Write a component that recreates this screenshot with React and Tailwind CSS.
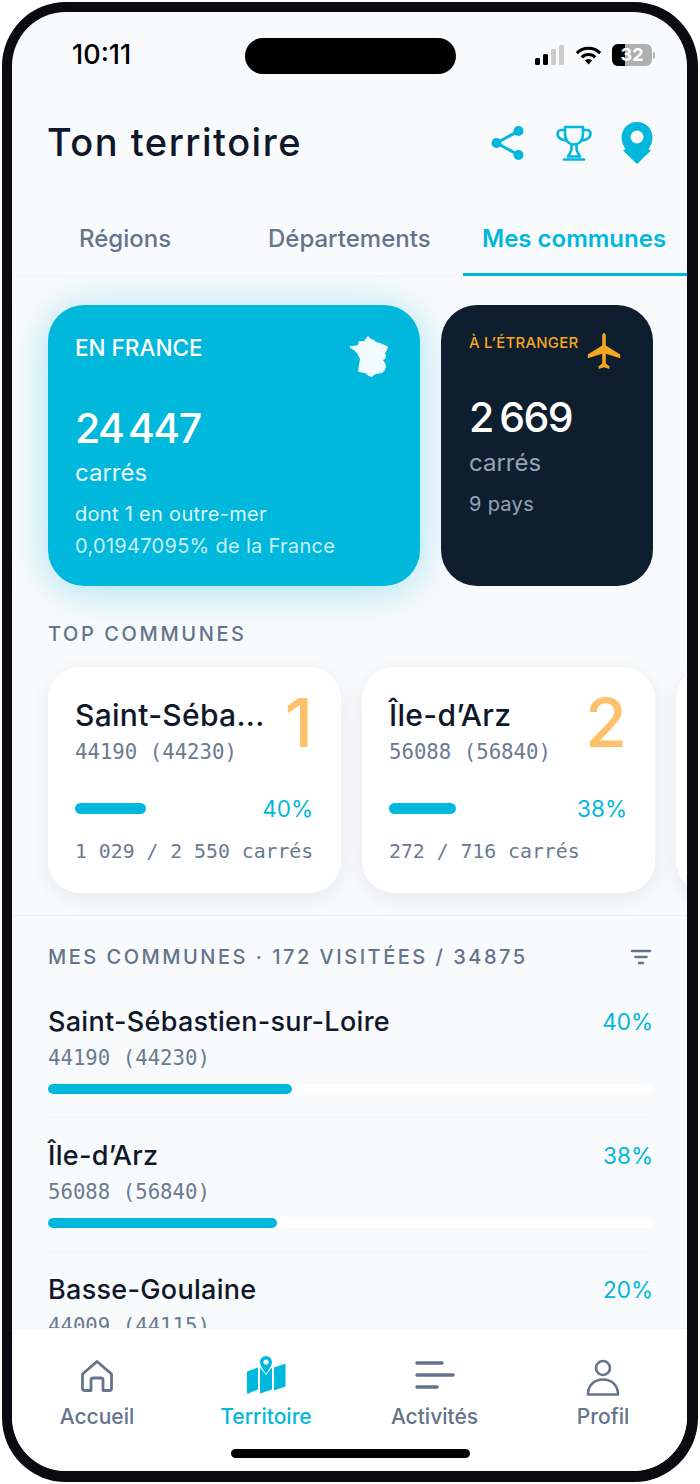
const cyan = "#00b8dc";

const communes = [
  { name: "Saint-Sébastien-sur-Loire", code: "44190 (44230)", pct: "40%", bar: "w-[244px]" },
  { name: "Île-d’Arz", code: "56088 (56840)", pct: "38%", bar: "w-[229px]" },
  { name: "Basse-Goulaine", code: "44009 (44115)", pct: "20%", bar: "w-[121px]" },
];

const top = [
  { name: "Saint-Séba...", code: "44190 (44230)", pct: "40%", count: "1 029 / 2 550 carrés", rank: "1", bar: "w-[71px]" },
  { name: "Île-d’Arz", code: "56088 (56840)", pct: "38%", count: "272 / 716 carrés", rank: "2", bar: "w-[67px]" },
];

const StatusBar = () => (
  <div className="relative h-[74px] shrink-0 flex items-center justify-between pl-[60px] pr-[32px] pt-[12px]">
    <span className="text-[27px] leading-[32px] font-medium text-black">10:11</span>
    <div className="absolute left-[233px] top-[26px] h-[36px] w-[211px] rounded-full bg-black" />
    <div className="flex items-center gap-[10px]">
      <svg width="30" height="20" viewBox="0 0 30 20">
        <rect x="0" y="13" width="5" height="7" rx="1.500" fill="#000" />
        <rect x="8" y="9" width="5" height="11" rx="1.500" fill="#000" />
        <rect x="16" y="4" width="5" height="16" rx="1.500" fill="#ccc" />
        <rect x="24" y="0" width="5" height="20" rx="1.500" fill="#ccc" />
      </svg>
      <svg width="27" height="21" viewBox="0 0 29 22">
        <path d="M2 8.500a17.500 17.500 0 0 1 25 0" fill="none" stroke="#000" strokeWidth="3.400" />
        <path d="M7.300 13a10 10 0 0 1 14.400 0" fill="none" stroke="#000" strokeWidth="3.400" />
        <path d="M10.600 16.300 14.500 20.800l3.900-4.500a5.500 5.500 0 0 0-7.800 0z" fill="#000" />
      </svg>
      <div className="flex items-center">
        <div className="relative h-[22px] w-[40px] rounded-[6px] bg-[#b0b0b0] overflow-hidden flex items-center justify-center">
          <div className="absolute inset-y-0 left-0 w-[13px] bg-black" />
          <span className="relative text-[18px] leading-none font-bold text-white">32</span>
        </div>
        <div className="ml-[1px] h-[7px] w-[2px] rounded-r-full bg-[#b0b0b0]" />
      </div>
    </div>
  </div>
);

const ShareIcon = () => (
  <svg width="34" height="36" viewBox="0 0 34 36" fill={cyan} className="mr-[2px]">
    <circle cx="5.500" cy="18" r="5" />
    <circle cx="27.500" cy="6" r="5" />
    <circle cx="27.500" cy="30" r="5" />
    <path d="M5.500 18 27.500 6M5.500 18l22 12" fill="none" stroke={cyan} strokeWidth="3" />
  </svg>
);

const TrophyIcon = () => (
  <svg width="36" height="36" viewBox="0 0 36 36" fill="none" stroke={cyan} strokeWidth="2.600" strokeLinejoin="round" strokeLinecap="round">
    <path d="M9 2h18v7c0 6-3.500 10.500-9 10.500S9 15 9 9z" />
    <path d="M9 5H5.500C2.500 5 1.500 7 1.500 9c0 3 3 5.500 8.500 6.500M27 5h3.500c3 0 4 2 4 4 0 3-3 5.500-8.500 6.500" />
    <path d="M15.500 20v4c0 2.500-2 4.500-3.500 7.500h12c-1.500-3-3.500-5-3.500-7.500v-4" />
    <path d="M8 34.500h20" />
  </svg>
);

const PinIcon = () => (
  <svg width="32" height="42" viewBox="0 0 32 42">
    <path d="M16 0C7 0 .500 7 .500 15.500c0 4.500 1.700 8 4 11.500L2 28.500 16 42l14-13.500-2.500-1.500c2.300-3.500 4-7 4-11.500C31.500 7 25 0 16 0z" fill={cyan} />
    <circle cx="16" cy="15" r="6.500" fill="#f8fafc" />
  </svg>
);

const Header = () => (
  <div className="h-[119px] shrink-0 flex items-center justify-between pl-[35px] pr-[34px] pb-[7px]">
    <h1 className="text-[38px] leading-none font-medium tracking-[1.500px] text-[#0f172a]">Ton territoire</h1>
    <div className="flex items-center gap-[29px] pt-[2px]">
      <ShareIcon />
      <TrophyIcon />
      <PinIcon />
    </div>
  </div>
);

const Tabs = () => (
  <div className="h-[71px] shrink-0 flex items-stretch text-[24px] font-medium border-b border-[#f1f5f9]">
    <div className="w-[226px] pl-[67px] pt-[16px] text-[#64748b]">Régions</div>
    <div className="w-[225px] pl-[30px] pt-[16px] text-[#64748b]">Départements</div>
    <div className="flex-1 pl-[19px] pt-[16px] font-semibold text-[#00b8dc] border-b-[3px] border-[#00b8dc] mb-[-1px]">Mes communes</div>
  </div>
);

const FranceIcon = () => (
  <svg width="40" height="42" viewBox="0 0 40 42" fill="#f0fbff">
    <path d="M19 0l3 3 3 1 2 2 4 1 2 1 5 2 1 1-2 5-1 1 1 3-1 3-2 1 2 3 1 3-1 4-3 3-6 1-2 1-2 2-3-1-4-3-6-1-1-1 1-6 1-6-3-6-3-3-4-2 0-2 3 0 5-1 1-4 4 0 1 0z" />
  </svg>
);

const PlaneIcon = () => (
  <svg width="36" height="36" viewBox="2 2 20 20" fill="#f5a623">
    <path d="M21 16v-2l-8-5V3.500c0-.83-.67-1.500-1-1.500s-1 .67-1 1.500V9l-8 5v2l8-2.500V19l-2 1.500V22l3-1 3 1v-1.500L13 19v-5.500z" />
  </svg>
);

const TotalCards = () => (
  <div className="flex gap-[21px] pl-[36px] pr-[34px] mt-[29px]">
    <div className="w-[372px] h-[281px] shrink-0 rounded-[36px] bg-[#00b8dc] shadow-[0_4px_40px_rgba(0,184,220,0.35)] pl-[27px] pr-[31px] pt-[28px] text-white">
      <div className="flex items-start justify-between h-[60px]">
        <span className="text-[22.500px] leading-[30px] font-medium">EN FRANCE</span>
        <div className="mt-[3px]">
          <FranceIcon />
        </div>
      </div>
      <div className="text-[41px] leading-[50px] mt-[10px] font-medium tracking-[-1.500px] [word-spacing:-5px]">24 447</div>
      <div className="text-[24px] leading-[30px] mt-[5px] text-[#e6f8fc]">carrés</div>
      <div className="text-[20px] leading-[32px] mt-[10px] tracking-[0.3px] text-[#dff6fb]">dont 1 en outre-mer</div>
      <div className="text-[20px] leading-[32px] tracking-[0.3px] text-[#c8f0f8]">0,01947095% de la France</div>
    </div>
    <div className="flex-1 h-[281px] rounded-[36px] bg-[#0f1e2e] pl-[28px] pr-[31px] pt-[27px]">
      <div className="flex items-start justify-between h-[60px]">
        <span className="text-[15px] leading-[22px] font-medium tracking-[0.2px] text-[#f5a623]">À L’ÉTRANGER</span>
        <div className="mt-[1px]">
          <PlaneIcon />
        </div>
      </div>
      <div className="text-[41px] leading-[50px] font-medium tracking-[-1.500px] [word-spacing:-3px] text-white">2 669</div>
      <div className="text-[24px] leading-[30px] mt-[6px] text-[#94a3b8]">carrés</div>
      <div className="text-[20px] leading-[32px] mt-[10px] tracking-[0.3px] text-[#94a3b8]">9 pays</div>
    </div>
  </div>
);

const TopCard = ({ name, code, pct, count, rank, bar }) => (
  <div className="relative w-[293px] h-[226px] shrink-0 rounded-[32px] bg-white shadow-[0_6px_22px_rgba(15,23,42,0.07)] pl-[27px] pr-[28px] pt-[30px]">
    <div className="text-[30px] leading-[36px] font-medium tracking-[0.3px] text-[#0f172a]">{name}</div>
    <div className="font-['DejaVu_Sans_Mono',monospace] text-[20.700px] leading-[30px] mt-[4px] text-[#6b7a90]">{code}</div>
    <div className="flex items-start justify-between mt-[27px]">
      <div className={`h-[11px] mt-[9px] rounded-full bg-[#00b8dc] ${bar}`} />
      <span className="text-[22.500px] leading-[30px] text-[#00b8dc]">{pct}</span>
    </div>
    <div className="font-['DejaVu_Sans_Mono',monospace] text-[19.800px] leading-[30px] mt-[13px] whitespace-nowrap text-[#6b7a90]">{count}</div>
    <div className="absolute right-[28px] top-[17px] text-[68px] leading-[76px] font-medium text-[#fdc06b]">{rank}</div>
  </div>
);

const TopCommunes = () => (
  <div className="border-b border-[#eef2f6]">
    <div className="pl-[36px] mt-[33px] text-[20px] leading-[30px] font-medium tracking-[2.600px] text-[#64748b]">TOP COMMUNES</div>
    <div className="flex gap-[21px] pl-[36px] pt-[18px] pb-[22px] overflow-hidden">
      {top.map((c) => (
        <TopCard key={c.rank} {...c} />
      ))}
      <div className="w-[294px] h-[226px] shrink-0 rounded-[32px] bg-white shadow-[0_6px_22px_rgba(15,23,42,0.07)]" />
    </div>
  </div>
);

const CommuneRow = ({ name, code, pct, bar }) => (
  <div className="h-[134px] shrink-0 border-b border-[#f1f5f9] pt-[20px]">
    <div className="flex items-center justify-between">
      <span className="text-[27px] leading-[36px] font-medium tracking-[0.3px] text-[#0f172a]">{name}</span>
      <span className="text-[22.500px] leading-[36px] text-[#00b8dc]">{pct}</span>
    </div>
    <div className="font-['DejaVu_Sans_Mono',monospace] text-[20.700px] leading-[30px] mt-[3px] text-[#6b7a90]">{code}</div>
    <div className="mt-[11px] h-[10px] rounded-full bg-white">
      <div className={`h-[10px] rounded-full bg-[#00b8dc] ${bar}`} />
    </div>
  </div>
);

const CommuneList = () => (
  <div className="pl-[36px] pr-[34px]">
    <div className="flex items-center justify-between h-[30px] mt-[26px]">
      <span className="text-[20px] leading-[30px] font-medium tracking-[2.500px] text-[#64748b]">MES COMMUNES · 172 VISITÉES / 34875</span>
      <svg width="22" height="18" viewBox="0 0 22 18" stroke="#64748b" strokeWidth="2.600" strokeLinecap="round" className="mr-[1px]">
        <path d="M2 3h18M5.500 9h11M9 15h4" />
      </svg>
    </div>
    <div className="mt-[12px]">
      {communes.map((c) => (
        <CommuneRow key={c.code} {...c} />
      ))}
    </div>
  </div>
);

const NavItem = ({ label, active, width, children }) => (
  <div className={`flex flex-col items-center ${width}`}>
    <div className="h-[42px] flex items-end justify-center">{children}</div>
    <span className={`text-[21px] leading-[28px] mt-[9px] font-medium ${active ? "text-[#00b8dc]" : "text-[#64748b]"}`}>{label}</span>
  </div>
);

const BottomNav = () => (
  <div className="absolute inset-x-0 bottom-0 h-[143px] bg-white border-t border-[#f1f5f9]">
    <div className="flex pt-[23px]">
      <NavItem label="Accueil" width="w-[170px]">
        <svg width="32" height="32" viewBox="0 0 32 32" fill="none" stroke="#64748b" strokeWidth="2.800" strokeLinejoin="round" className="mb-[2px]">
          <path d="M1.500 14 16 1.500 30.500 14v14.500a2 2 0 0 1-2 2H22V20a2 2 0 0 0-2-2h-8a2 2 0 0 0-2 2v10.500H3.500a2 2 0 0 1-2-2z" />
        </svg>
      </NavItem>
      <NavItem label="Territoire" active width="w-[168px]">
        <svg width="40" height="38" viewBox="0 0 40 38" fill={cyan}>
          <path d="M1 15.500 12 11.500V33.500L2.500 37.500A1 1 0 0 1 1 36.500z" />
          <path d="M14 11.500l6 7.500 6-7.500V33.500L14 37.500z" />
          <path d="M28 11.500l10-3.500a1 1 0 0 1 1.500 1V30.500L28 34.500z" />
          <path d="M20 0a6 6 0 0 0-6 6c0 4 3.500 8 6 12 2.500-4 6-8 6-12a6 6 0 0 0-6-6z" />
          <circle cx="20" cy="6" r="2.600" fill="#fff" />
        </svg>
      </NavItem>
      <NavItem label="Activités" width="w-[169px]">
        <svg width="40" height="28" viewBox="0 0 40 28" stroke="#64748b" strokeWidth="3.500" strokeLinecap="round" className="mb-[5px]">
          <path d="M2 2h25M2 14h36M2 26h20" />
        </svg>
      </NavItem>
      <NavItem label="Profil" width="w-[168px]">
        <svg width="34" height="37" viewBox="0 0 34 37" fill="none" stroke="#64748b" strokeWidth="2.600" className="mb-[-2px]">
          <circle cx="17" cy="9" r="7" />
          <path d="M2 35.500c0-9 6-15 15-15s15 6 15 15z" strokeLinejoin="round" />
        </svg>
      </NavItem>
    </div>
    <div className="absolute left-[219px] bottom-[13px] h-[9px] w-[239px] rounded-full bg-black" />
  </div>
);

export default function App() {
  return (
    <div className="w-[700px] h-[1484px] bg-white p-[2px] font-['Inter',sans-serif]">
      <div className="h-full rounded-[64px] bg-[#0a0a10] pl-[10px] pt-[10px] pr-[11px] pb-[11px]">
        <div className="relative h-full rounded-[54px] bg-[#f8fafc] overflow-hidden flex flex-col">
          <StatusBar />
          <Header />
          <Tabs />
          <div className="flex-1 overflow-hidden">
            <TotalCards />
            <TopCommunes />
            <CommuneList />
          </div>
          <BottomNav />
        </div>
      </div>
    </div>
  );
}
